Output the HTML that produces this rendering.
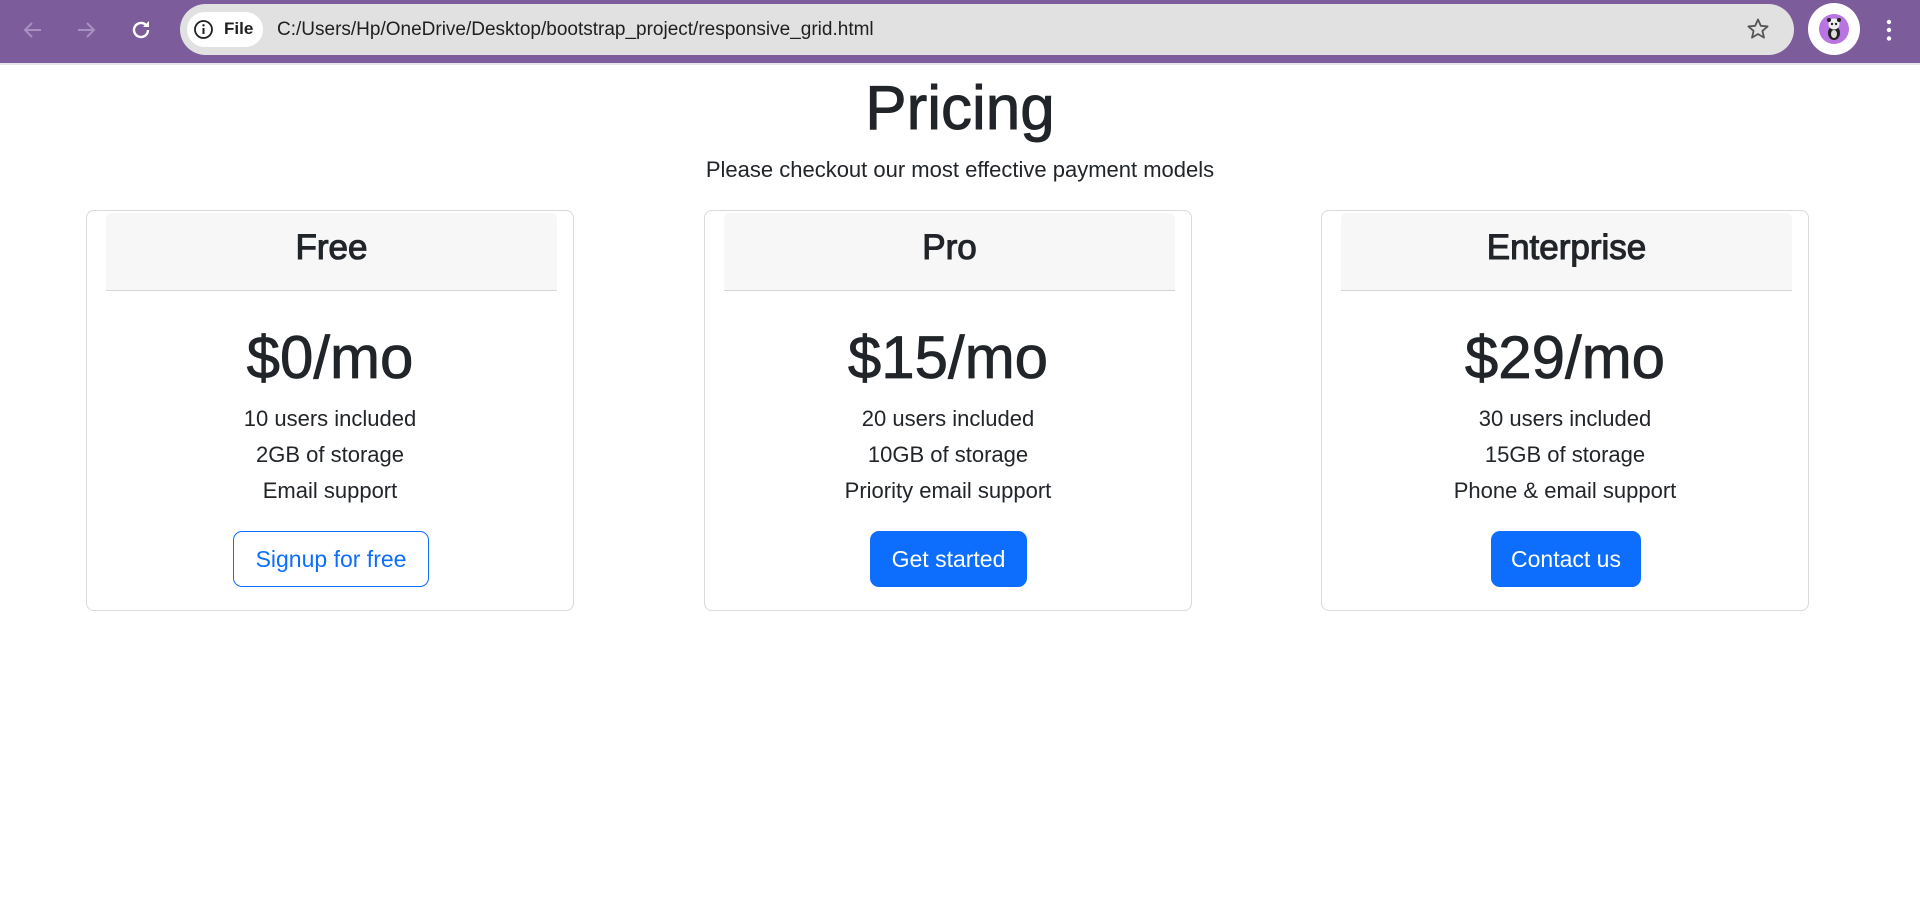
<!DOCTYPE html>
<html><head><meta charset="utf-8"><style>
*{margin:0;padding:0;box-sizing:border-box}
html,body{width:1920px;height:915px;overflow:hidden;background:#fff;font-family:"Liberation Sans",sans-serif;color:#212529}
.bar{position:absolute;left:0;top:0;width:1920px;height:63px;background:#7d5c9c}
.line{position:absolute;left:0;top:63px;width:1920px;height:2px;background:#e8e4ee}
.addr{position:absolute;left:180px;top:4px;width:1614px;height:51px;border-radius:26px;background:#e1e1e1}
.chip{position:absolute;left:187px;top:12px;width:76px;height:35px;border-radius:18px;background:#fff}
.chip span{position:absolute;left:37px;top:7px;font-size:17px;font-weight:bold;color:#1f1f1f}
.url{position:absolute;left:277px;top:19px;font-size:19px;color:#1f1f1f;white-space:nowrap}
.abs{position:absolute}
.c{position:absolute;text-align:center;white-space:nowrap}
.card{position:absolute;top:210px;width:488px;height:401px;border:1px solid #d9d9d9;border-radius:8px}
.hd{position:absolute;left:19px;top:2px;width:451px;height:78px;background:#f7f7f7;border-bottom:1px solid #d4d4d4;border-radius:6px 6px 0 0}
.hd div{position:absolute;left:0;width:100%;top:15px;text-align:center;font-size:35px;-webkit-text-stroke:1.1px #212529}
.price{position:absolute;left:0;width:100%;top:112px;text-align:center;font-size:60px;-webkit-text-stroke:0.8px #212529}
.li{position:absolute;left:0;width:100%;text-align:center;font-size:22px}
.btn{position:absolute;top:320px;height:56px;border-radius:9px;font-size:23px;line-height:54px;text-align:center}
.solid{background:#0d6efd;color:#fff;border:1px solid #0d6efd}
.out{color:#0d6efd;border:1px solid #0d6efd;background:#fff}
</style></head><body>
<div class="bar"></div><div class="line"></div>
<svg class="abs" style="left:21px;top:18px" width="24" height="24" viewBox="0 0 24 24"><path d="M20 12H5M11 5l-7 7 7 7" fill="none" stroke="#a890c0" stroke-width="2"/></svg>
<svg class="abs" style="left:74px;top:18px" width="24" height="24" viewBox="0 0 24 24"><path d="M4 12h15M13 5l7 7-7 7" fill="none" stroke="#a890c0" stroke-width="2"/></svg>
<svg class="abs" style="left:129px;top:18px" width="24" height="24" viewBox="0 0 24 24"><path d="M19 12a7 7 0 1 1-2.2-5.1" fill="none" stroke="#fff" stroke-width="2.4"/><path d="M20 3v6h-6z" fill="#fff"/></svg>
<div class="addr"></div>
<div class="chip"><svg class="abs" style="left:6px;top:7px" width="21" height="21" viewBox="0 0 21 21"><circle cx="10.5" cy="10.5" r="8.5" fill="none" stroke="#1f1f1f" stroke-width="1.8"/><path d="M10.5 9v6" stroke="#1f1f1f" stroke-width="2"/><circle cx="10.5" cy="6.3" r="1.2" fill="#1f1f1f"/></svg><span>File</span></div>
<div class="url">C:/Users/Hp/OneDrive/Desktop/bootstrap_project/responsive_grid.html</div>
<svg class="abs" style="left:1746px;top:17px" width="24" height="24" viewBox="0 0 24 24"><path d="M12 2.5l2.8 6.3 6.8.6-5.2 4.5 1.6 6.7L12 17l-6 3.6 1.6-6.7-5.2-4.5 6.8-.6z" fill="none" stroke="#555" stroke-width="1.8" stroke-linejoin="round"/></svg>
<svg class="abs" style="left:1808px;top:3px" width="52" height="52" viewBox="0 0 52 52"><circle cx="26" cy="26" r="26" fill="#fff"/><circle cx="26" cy="26" r="15" fill="#b874e0"/><ellipse cx="26" cy="30" rx="6" ry="7" fill="#222"/><ellipse cx="26" cy="31" rx="3" ry="4" fill="#ddd"/><circle cx="26" cy="21" r="5.5" fill="#eee"/><circle cx="21" cy="17" r="2" fill="#222"/><circle cx="31" cy="17" r="2" fill="#222"/><circle cx="24" cy="21" r="1.2" fill="#222"/><circle cx="28" cy="21" r="1.2" fill="#222"/></svg>
<svg class="abs" style="left:1884px;top:18px" width="10" height="26" viewBox="0 0 10 26"><circle cx="5" cy="4" r="2.2" fill="#fff"/><circle cx="5" cy="12" r="2.2" fill="#fff"/><circle cx="5" cy="20.5" r="2.2" fill="#fff"/></svg>

<div class="c" style="left:0;width:1920px;top:73px;font-size:62px;-webkit-text-stroke:0.9px #212529">Pricing</div>
<div class="c" style="left:0;width:1920px;top:157px;font-size:22px">Please checkout our most effective payment models</div>

<div class="card" style="left:86px">
<div class="hd"><div>Free</div></div>
<div class="price">$0/mo</div>
<div class="li" style="top:195px">10 users included</div>
<div class="li" style="top:231px">2GB of storage</div>
<div class="li" style="top:267px">Email support</div>
<div class="btn out" style="left:146px;width:196px">Signup for free</div>
</div>
<div class="card" style="left:704px">
<div class="hd"><div>Pro</div></div>
<div class="price">$15/mo</div>
<div class="li" style="top:195px">20 users included</div>
<div class="li" style="top:231px">10GB of storage</div>
<div class="li" style="top:267px">Priority email support</div>
<div class="btn solid" style="left:165px;width:157px">Get started</div>
</div>
<div class="card" style="left:1321px">
<div class="hd"><div>Enterprise</div></div>
<div class="price">$29/mo</div>
<div class="li" style="top:195px">30 users included</div>
<div class="li" style="top:231px">15GB of storage</div>
<div class="li" style="top:267px">Phone &amp; email support</div>
<div class="btn solid" style="left:169px;width:150px">Contact us</div>
</div>
</body></html>
